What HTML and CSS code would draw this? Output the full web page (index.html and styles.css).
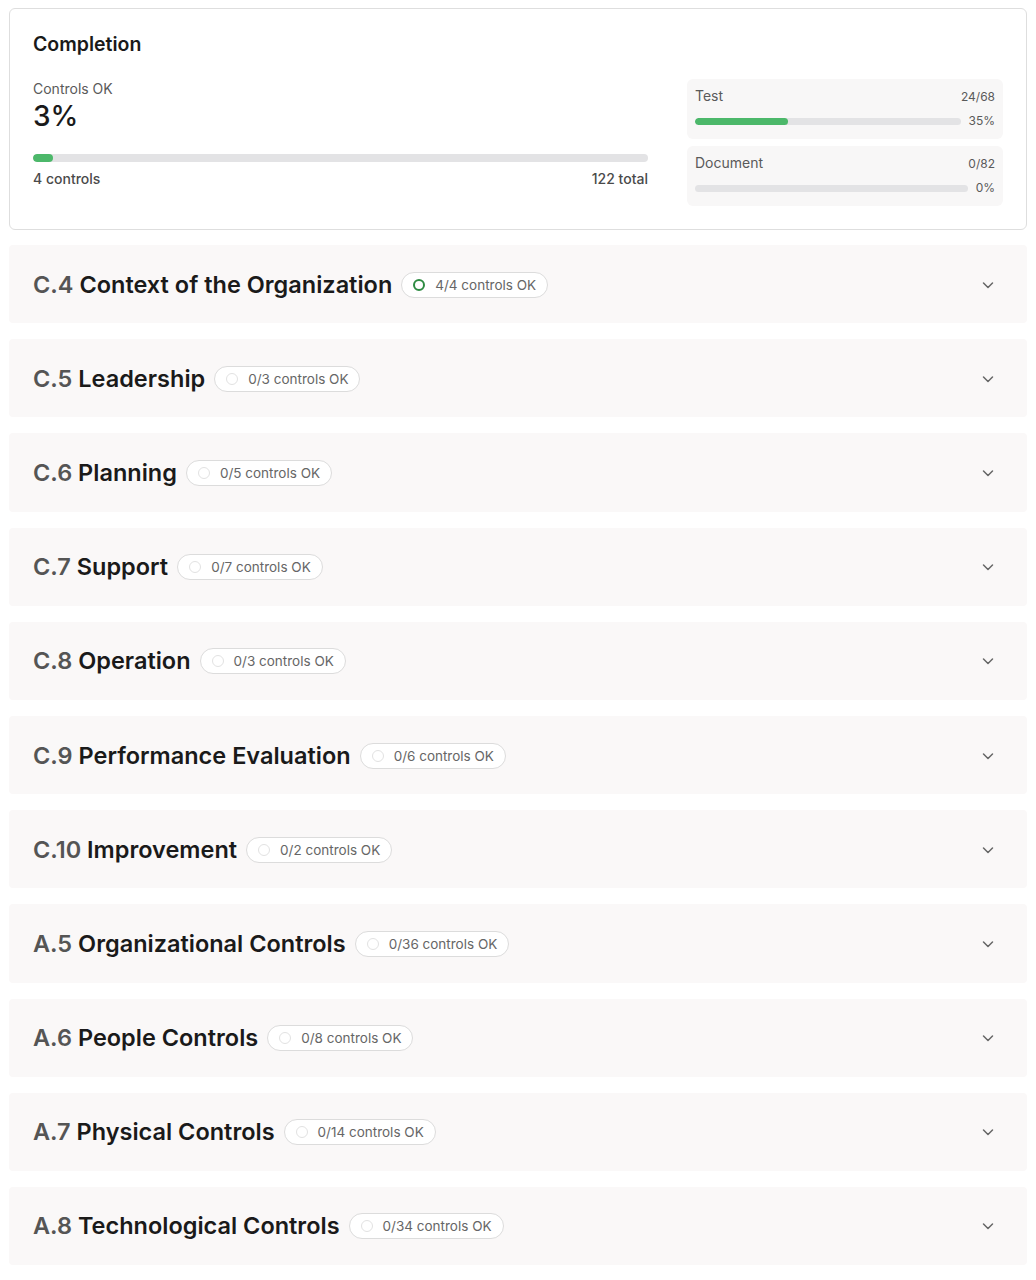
FILE: index.html
```html
<!DOCTYPE html>
<html lang="en">
<head>
<meta charset="utf-8">
<title>Completion</title>
<link rel="stylesheet" href="styles.css">
</head>
<body>
<div class="page">
  <section class="card">
    <h2 class="card-title">Completion</h2>
    <div class="card-grid">
      <div class="overall">
        <div class="overall-label">Controls OK</div>
        <div class="overall-value">3%</div>
        <div class="bar bar-main"><div class="fill" style="width:3.3%"></div></div>
        <div class="overall-foot"><span>4 controls</span><span>122 total</span></div>
      </div>
      <div class="kinds">
        <div class="kind">
          <div class="kind-head"><span class="kind-name">Test</span><span class="kind-num">24/68</span></div>
          <div class="kind-bar"><div class="bar bar-small"><div class="fill" style="width:35%"></div></div><span class="kind-num">35%</span></div>
        </div>
        <div class="kind">
          <div class="kind-head"><span class="kind-name">Document</span><span class="kind-num">0/82</span></div>
          <div class="kind-bar"><div class="bar bar-small"><div class="fill" style="width:0%"></div></div><span class="kind-num">0%</span></div>
        </div>
      </div>
    </div>
  </section>

  <div class="sections">
    <div class="row"><div class="row-left"><h3 class="row-title"><span class="code">C.4</span> Context of the Organization</h3><span class="badge badge-ok"><span class="dot"></span>4/4 controls OK</span></div><svg class="chev" viewBox="0 0 16 16"><path d="M3.5 6l4.5 4.5L12.5 6"/></svg></div>
    <div class="row"><div class="row-left"><h3 class="row-title"><span class="code">C.5</span> Leadership</h3><span class="badge"><span class="dot"></span>0/3 controls OK</span></div><svg class="chev" viewBox="0 0 16 16"><path d="M3.5 6l4.5 4.5L12.5 6"/></svg></div>
    <div class="row"><div class="row-left"><h3 class="row-title"><span class="code">C.6</span> Planning</h3><span class="badge"><span class="dot"></span>0/5 controls OK</span></div><svg class="chev" viewBox="0 0 16 16"><path d="M3.5 6l4.5 4.5L12.5 6"/></svg></div>
    <div class="row"><div class="row-left"><h3 class="row-title"><span class="code">C.7</span> Support</h3><span class="badge"><span class="dot"></span>0/7 controls OK</span></div><svg class="chev" viewBox="0 0 16 16"><path d="M3.5 6l4.5 4.5L12.5 6"/></svg></div>
    <div class="row"><div class="row-left"><h3 class="row-title"><span class="code">C.8</span> Operation</h3><span class="badge"><span class="dot"></span>0/3 controls OK</span></div><svg class="chev" viewBox="0 0 16 16"><path d="M3.5 6l4.5 4.5L12.5 6"/></svg></div>
    <div class="row"><div class="row-left"><h3 class="row-title"><span class="code">C.9</span> Performance Evaluation</h3><span class="badge"><span class="dot"></span>0/6 controls OK</span></div><svg class="chev" viewBox="0 0 16 16"><path d="M3.5 6l4.5 4.5L12.5 6"/></svg></div>
    <div class="row"><div class="row-left"><h3 class="row-title"><span class="code">C.10</span> Improvement</h3><span class="badge"><span class="dot"></span>0/2 controls OK</span></div><svg class="chev" viewBox="0 0 16 16"><path d="M3.5 6l4.5 4.5L12.5 6"/></svg></div>
    <div class="row"><div class="row-left"><h3 class="row-title"><span class="code">A.5</span> Organizational Controls</h3><span class="badge"><span class="dot"></span>0/36 controls OK</span></div><svg class="chev" viewBox="0 0 16 16"><path d="M3.5 6l4.5 4.5L12.5 6"/></svg></div>
    <div class="row"><div class="row-left"><h3 class="row-title"><span class="code">A.6</span> People Controls</h3><span class="badge"><span class="dot"></span>0/8 controls OK</span></div><svg class="chev" viewBox="0 0 16 16"><path d="M3.5 6l4.5 4.5L12.5 6"/></svg></div>
    <div class="row"><div class="row-left"><h3 class="row-title"><span class="code">A.7</span> Physical Controls</h3><span class="badge"><span class="dot"></span>0/14 controls OK</span></div><svg class="chev" viewBox="0 0 16 16"><path d="M3.5 6l4.5 4.5L12.5 6"/></svg></div>
    <div class="row"><div class="row-left"><h3 class="row-title"><span class="code">A.8</span> Technological Controls</h3><span class="badge"><span class="dot"></span>0/34 controls OK</span></div><svg class="chev" viewBox="0 0 16 16"><path d="M3.5 6l4.5 4.5L12.5 6"/></svg></div>
  </div>
</div>
</body>
</html>
```

FILE: styles.css
```css
* { box-sizing: border-box; }
html, body { margin: 0; padding: 0; background: #ffffff; }
body {
  font-family: Inter, "Liberation Sans", Arial, sans-serif;
  color: #1a1a1a;
}
.page { padding: 8px 9px; }

.card {
  border: 1px solid #dedede;
  border-radius: 6px;
  padding: 23px 23px 23px 23px;
  background: #fff;
}
.card-title {
  margin: 0;
  font-size: 19.5px;
  line-height: 24px;
  font-weight: 600;
  color: #1a1a1a;
}
.card-grid {
  margin-top: 23px;
  display: grid;
  grid-template-columns: 1fr 316px;
  column-gap: 39px;
}
.overall-label {
  font-size: 14px;
  line-height: 20px;
  color: #5a5a5a;
}
.overall-value {
  font-size: 28px;
  line-height: 34px;
  font-weight: 500;
  color: #1a1a1a;
}
.bar {
  background: #e3e3e5;
  border-radius: 999px;
  overflow: hidden;
}
.bar .fill {
  height: 100%;
  background: #4cb86a;
  border-radius: 999px;
}
.bar-main { height: 8px; margin-top: 21px; }
.overall-foot {
  margin-top: 7px;
  display: flex;
  justify-content: space-between;
  font-size: 14px;
  line-height: 20px;
  font-weight: 500;
  color: #4a4a4a;
}
.kinds { display: flex; flex-direction: column; gap: 7px; }
.kind {
  background: #f8f7f7;
  border-radius: 6px;
  padding: 8px 8px 9px 8px;
}
.kind-head {
  display: flex;
  justify-content: space-between;
  align-items: baseline;
  line-height: 18px;
}
.kind-name { font-size: 14px; color: #5a5a5a; }
.kind-num { font-size: 12px; color: #5a5a5a; line-height: 18px; }
.kind-bar {
  margin-top: 6px;
  display: flex;
  align-items: center;
  gap: 8px;
}
.bar-small { flex: 1; height: 7px; }

.sections {
  margin-top: 15px;
  display: flex;
  flex-direction: column;
  gap: 16px;
}
.row {
  background: #faf8f8;
  border-radius: 4px;
  height: 78.2px;
  padding: 1px 31px 0 24px;
  display: flex;
  align-items: center;
  justify-content: space-between;
}
.row-left { display: flex; align-items: center; gap: 9px; }
.row-title {
  margin: 0;
  font-size: 23.5px;
  line-height: 30px;
  font-weight: 600;
  color: #1a1a1a;
}
.code { color: #555555; font-weight: 600; }
.badge {
  display: inline-flex;
  align-items: center;
  gap: 10px;
  height: 26px;
  padding: 0 11px;
  border: 1px solid #dcdcdc;
  border-radius: 13px;
  background: #fff;
  font-size: 13.5px;
  color: #666;
}
.dot {
  width: 12px;
  height: 12px;
  border-radius: 50%;
  border: 1.5px solid #e2e2e2;
}
.badge-ok .dot { border: 2px solid #2e8b42; }
.chev {
  width: 16px;
  height: 16px;
  fill: none;
  stroke: #666;
  stroke-width: 1.5;
  stroke-linecap: round;
  stroke-linejoin: round;
}
```
